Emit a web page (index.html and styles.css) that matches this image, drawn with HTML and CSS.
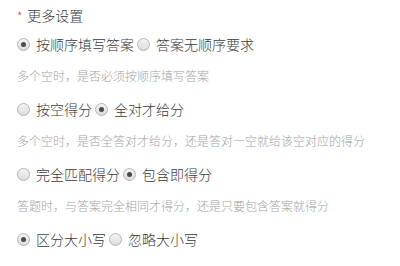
FILE: index.html
```html
<!DOCTYPE html>
<html>
<head>
  <meta charset="UTF-8">
  <meta name="viewport" content="width=device-width, initial-scale=1.0">
  <link rel="stylesheet" href="styles.css">
</head>
<body>
<div class="settings">
  <div class="title"><span class="star">*</span>更多设置</div>

  <div class="group">
    <div class="options">
      <label class="option"><span class="radio checked"></span>按顺序填写答案</label>
      <label class="option"><span class="radio"></span>答案无顺序要求</label>
    </div>
    <div class="hint">多个空时，是否必须按顺序填写答案</div>
  </div>

  <div class="group">
    <div class="options">
      <label class="option"><span class="radio"></span>按空得分</label>
      <label class="option"><span class="radio checked"></span>全对才给分</label>
    </div>
    <div class="hint">多个空时，是否全答对才给分，还是答对一空就给该空对应的得分</div>
  </div>

  <div class="group">
    <div class="options">
      <label class="option"><span class="radio"></span>完全匹配得分</label>
      <label class="option"><span class="radio checked"></span>包含即得分</label>
    </div>
    <div class="hint">答题时，与答案完全相同才得分，还是只要包含答案就得分</div>
  </div>

  <div class="group">
    <div class="options">
      <label class="option"><span class="radio checked"></span>区分大小写</label>
      <label class="option"><span class="radio"></span>忽略大小写</label>
    </div>
  </div>
</div>
</body>
</html>
```

FILE: styles.css
```css
body {
  margin: 0;
  background: #fff;
  font-family: "Noto Sans CJK SC", "Liberation Sans", sans-serif;
  font-weight: 300;
  color: #3a3a3a;
}

.settings {
  padding: 5px 0 0 17px;
}

.title {
  font-size: 14px;
  line-height: 20px;
  height: 20px;
  margin-bottom: 9px;
}

.star {
  color: #e4393c;
  font-size: 12px;
  margin-right: 5px;
}

.group {
  margin-bottom: 13px;
}

.options {
  display: flex;
  height: 20px;
  align-items: center;
}

.option {
  display: flex;
  align-items: center;
  font-size: 14px;
  line-height: 20px;
  margin-right: 3px;
  cursor: pointer;
}

.radio {
  width: 11px;
  height: 11px;
  border: 1px solid #b4b4b4;
  border-radius: 50%;
  background: linear-gradient(#f4f4f4, #dcdcdc);
  margin-right: 6px;
  display: flex;
  align-items: center;
  justify-content: center;
  box-sizing: content-box;
}

.radio.checked::after {
  content: "";
  width: 5px;
  height: 5px;
  border-radius: 50%;
  background: #4a4a4a;
}

.hint {
  margin-top: 12px;
  font-size: 12px;
  line-height: 20px;
  color: #a3a3a3;
}
```
